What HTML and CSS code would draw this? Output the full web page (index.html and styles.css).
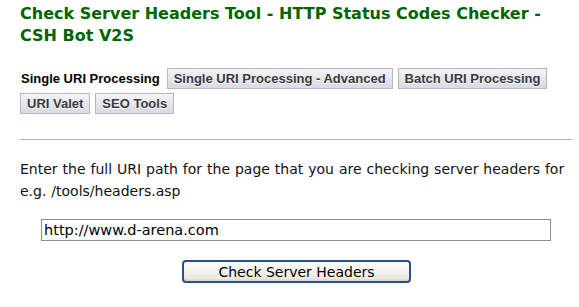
FILE: index.html
```html
<!DOCTYPE html>
<html lang="en">
<head>
    <meta charset="UTF-8">
    <title>Check Server Headers Tool</title>
    <link rel="stylesheet" href="styles.css">
</head>
<body>
    <h1>Check Server Headers Tool - HTTP Status Codes Checker - CSH Bot V2S</h1>
    <nav class="tabs">
        <span class="tab current">Single URI Processing</span>
        <a class="tab" href="#">Single URI Processing - Advanced</a>
        <a class="tab" href="#">Batch URI Processing</a>
        <a class="tab" href="#">URI Valet</a>
        <a class="tab" href="#">SEO Tools</a>
    </nav>
    <hr>
    <form class="check-form">
        <p>Enter the full URI path for the page that you are checking server headers for e.g. /tools/headers.asp</p>
        <input type="text" class="uri" value="http://www.d-arena.com">
        <div class="submit-row">
            <button type="button" class="submit">Check Server Headers</button>
        </div>
    </form>
</body>
</html>
```
FILE: styles.css
```css
body {
    margin: 0;
    padding: 0 7px 0 20px;
    background: #fff;
    font-family: "DejaVu Sans", Verdana, sans-serif;
    color: #000;
}

h1 {
    margin: 3px 0 0;
    font-size: 16px;
    line-height: 22px;
    color: #006400;
    font-weight: bold;
}

.tabs {
    display: flex;
    flex-wrap: wrap;
    align-items: center;
    gap: 4px 5px;
    margin-top: 21px;
    font-family: "Liberation Sans", Arial, sans-serif;
    font-size: 13px;
    font-weight: bold;
}

.tab {
    height: 19px;
    line-height: 19px;
    padding: 0 6px;
    border: 1px solid #b4b8c4;
    background: linear-gradient(#f4f4f8, #d8dae2);
    color: #3a3a3a;
    text-decoration: none;
    text-shadow: 0 1px 0 #fff;
}

.tab.current {
    border-color: transparent;
    background: none;
    color: #000;
    padding: 0 1px 0 0;
    text-shadow: none;
}

hr {
    margin: 25px 0 0;
    border: 0;
    border-top: 1px solid #b0b0b0;
}

.check-form p {
    margin: 18px 0 0;
    font-size: 14px;
    word-spacing: 0.5px;
    line-height: 22px;
    color: #111;
}

.uri {
    display: block;
    box-sizing: border-box;
    margin: 17px 0 0 21px;
    width: 510px;
    height: 22px;
    padding: 0 2px;
    border: 1px solid #8c9096;
    font-family: "DejaVu Sans", Verdana, sans-serif;
    font-size: 14.5px;
    color: #000;
}

.submit-row {
    display: flex;
    margin-top: 19px;
    padding-left: 162px;
}

.submit {
    box-sizing: border-box;
    width: 229px;
    height: 23px;
    border: 2px solid #2a4f8f;
    border-radius: 4px;
    background: linear-gradient(#ffffff, #eceae4 85%, #d6d2c6);
    font-family: "DejaVu Sans", Verdana, sans-serif;
    font-size: 14px;
    color: #000;
    padding: 0;
}
```
